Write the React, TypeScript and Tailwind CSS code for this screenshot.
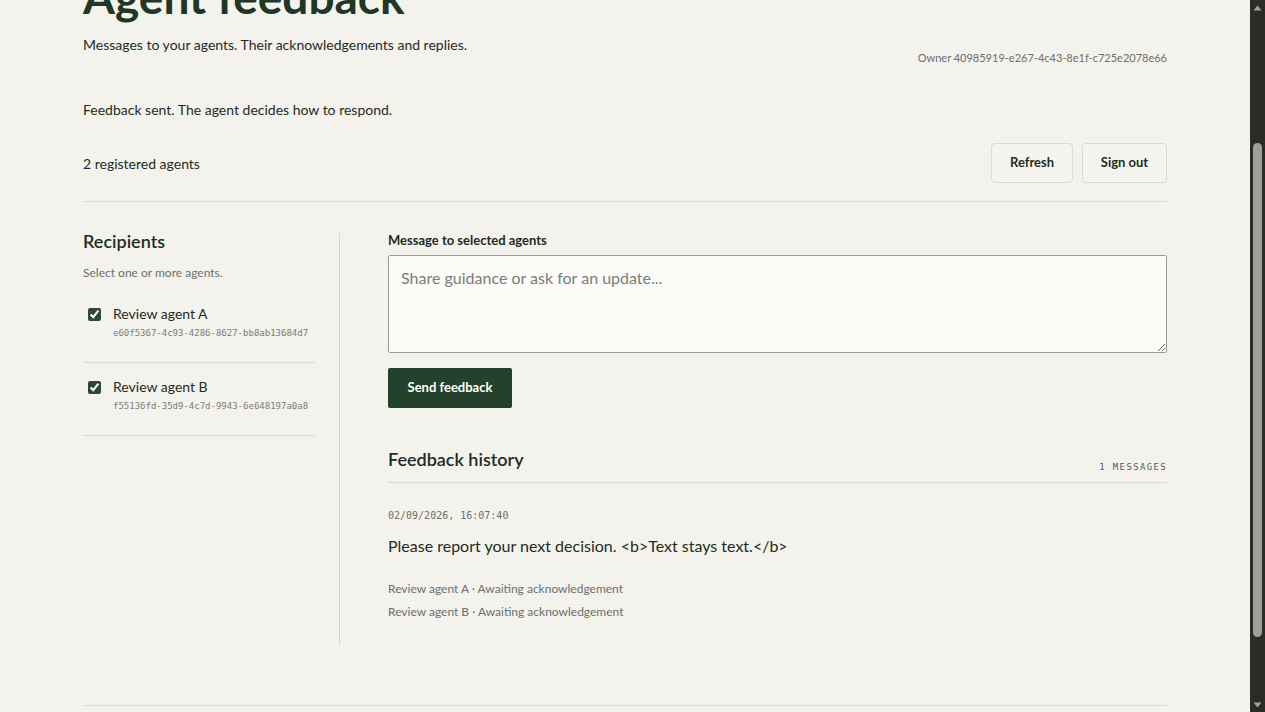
import React, { useLayoutEffect, useRef } from "react";

const agents = [
  { name: "Review agent A", id: "e60f5367-4c93-4286-8627-bb8ab13684d7" },
  { name: "Review agent B", id: "f55136fd-35d9-4c7d-9943-6e648197a0a8" },
];

function ScrollTrack() {
  return (
    <div className="flex w-[15px] shrink-0 flex-col bg-[#2b2b28]">
      <div className="flex h-[15px] items-center justify-center">
        <svg width="9" height="6" viewBox="0 0 9 6">
          <path d="M4.5 0.5 L8.5 5.5 L0.5 5.5 Z" fill="#a3a3a0" />
        </svg>
      </div>
      <div className="flex-1 px-[3px] pt-[128px]">
        <div className="h-[494px] w-full rounded-full bg-[#9e9e9c]" />
      </div>
      <div className="flex h-[15px] items-center justify-center">
        <svg width="9" height="6" viewBox="0 0 9 6">
          <path d="M0.5 0.5 L8.5 0.5 L4.5 5.5 Z" fill="#a3a3a0" />
        </svg>
      </div>
    </div>
  );
}

export default function App() {
  const scroller = useRef<HTMLDivElement>(null);

  // open the page part-way down, at the feedback form
  useLayoutEffect(() => {
    if (scroller.current) scroller.current.scrollTop = 185;
  }, []);

  return (
    <div className="flex h-screen bg-[#f3f2ec]">
      <div
        ref={scroller}
        className="flex-1 overflow-y-auto [scrollbar-width:none]"
      >
        <div className="font-['Lato','Noto_Sans',sans-serif] text-[#1f2c24]">
          <div className="mx-auto max-w-[1084px] pt-[156px] pb-[90px]">
            {/* page header */}
            <div className="flex items-end justify-between">
              <div>
                <h1 className="text-[46px] font-bold leading-[52px] text-[#1e3727]">
                  Agent feedback
                </h1>
                <p className="mt-[12px] text-[14px] leading-5">
                  Messages to your agents. Their acknowledgements and replies.
                </p>
              </div>
              <p className="mb-[-11px] text-[11px] leading-4 text-[#6c7069]">
                Owner 40985919-e267-4c43-8e1f-c725e2078e66
              </p>
            </div>

            <p className="mt-[45px] text-[14px] leading-5">
              Feedback sent. The agent decides how to respond.
            </p>

            {/* toolbar */}
            <div className="mt-[23px] flex items-center justify-between border-b border-[#dddbd3] pb-[18px]">
              <span className="text-[14px]">2 registered agents</span>
              <div className="flex gap-[9px]">
                <button className="h-10 w-[82px] rounded-sm border border-[#dcdad2] bg-[#f5f4ef] text-[13px] font-bold text-[#1f2c24]">
                  Refresh
                </button>
                <button className="h-10 w-[85px] rounded-sm border border-[#dcdad2] bg-[#f5f4ef] text-[13px] font-bold text-[#1f2c24]">
                  Sign out
                </button>
              </div>
            </div>

            {/* main */}
            <div className="mt-[31px] grid grid-cols-[257px_1fr]">
              <aside className="border-r border-[#d8d6ce] pr-6">
                <h2 className="mt-[-4px] text-[18px] font-semibold leading-6">
                  Recipients
                </h2>
                <p className="mt-[12px] text-[12px] leading-4 text-[#6c7069]">
                  Select one or more agents.
                </p>
                <ul className="mt-[9px]">
                  {agents.map((a) => (
                    <li
                      key={a.id}
                      className="flex gap-[12px] border-b border-[#dddbd3] pt-[14px] pb-[22px] pl-[5px]"
                    >
                      <input
                        type="checkbox"
                        defaultChecked
                        className="mt-[4px] h-[13px] w-[13px] accent-[#2c4a33]"
                      />
                      <div>
                        <div className="text-[14px] leading-5">{a.name}</div>
                        <div className="mt-[2px] font-['DejaVu_Sans_Mono',monospace] text-[9px] leading-[14px] text-[#7a7d77]">
                          {a.id}
                        </div>
                      </div>
                    </li>
                  ))}
                </ul>
              </aside>

              <section className="pl-12 pb-[22px]">
                <label className="-mt-px block text-[13px] font-bold leading-4">
                  Message to selected agents
                </label>
                <textarea
                  placeholder="Share guidance or ask for an update..."
                  className="mt-[7px] block h-[98px] w-full rounded-[2px] border border-[#9b9b93] bg-[#fbfbf7] px-3 py-[10px] text-[16px] text-[#1f2c24] placeholder:text-[#7b7d78] outline-none"
                />
                <button className="mt-[15px] h-10 w-[124px] rounded-[2px] bg-[#24422b] text-[13px] font-bold text-white">
                  Send feedback
                </button>

                <div className="mt-[39px] flex items-end justify-between border-b border-[#dddbd3] pb-[11px]">
                  <h2 className="text-[18px] font-semibold leading-6">Feedback history</h2>
                  <span className="mb-[-3px] font-['DejaVu_Sans_Mono',monospace] text-[9px] leading-[14px] tracking-[0.15em] text-[#555a54]">
                    1 MESSAGES
                  </span>
                </div>

                <article className="pt-[26px]">
                  <div className="font-['DejaVu_Sans_Mono',monospace] text-[10px] leading-[14px] text-[#6c7069]">
                    02/09/2026, 16:07:40
                  </div>
                  <p className="mt-[13px] text-[16px] leading-5">
                    Please report your next decision. &lt;b&gt;Text stays text.&lt;/b&gt;
                  </p>
                  <ul className="mt-[21px] text-[12px] leading-[23px] text-[#6c7069]">
                    <li>Review agent A · Awaiting acknowledgement</li>
                    <li>Review agent B · Awaiting acknowledgement</li>
                  </ul>
                </article>
              </section>
            </div>

            <footer className="mt-[60px] border-t border-[#dddbd3]" />
          </div>
        </div>
      </div>
      <ScrollTrack />
    </div>
  );
}
